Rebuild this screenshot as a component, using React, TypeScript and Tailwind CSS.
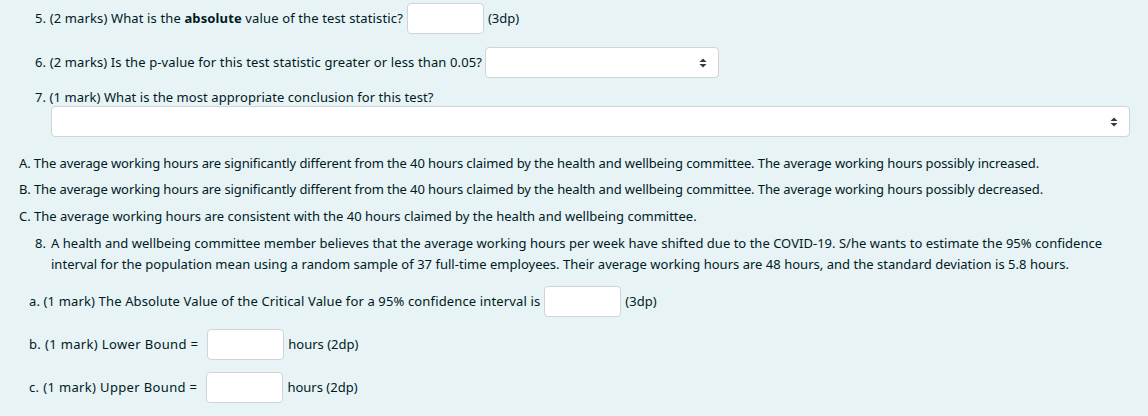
const font = { fontFamily: '"Noto Sans", "Open Sans", sans-serif' };

const TextBox = ({ w }: { w: string }) => (
  <div className={`${w} h-[31px] rounded-[4px] border border-[#ced4da] bg-white`} />
);

const SelectBox = ({ className }: { className: string }) => (
  <div
    className={`${className} flex items-center justify-end rounded-[4px] border border-[#ced4da] bg-white pr-[11px]`}
  >
    <svg width="8" height="10" viewBox="0 0 8 10">
      <path d="M4 0.5 L7.5 4 L0.5 4 Z" fill="#343a40" />
      <path d="M4 9.5 L7.5 6 L0.5 6 Z" fill="#343a40" />
    </svg>
  </div>
);

export default function App() {
  return (
    <div
      className="w-[1148px] h-[416px] overflow-hidden bg-[#e7f3f5] text-[13px] text-[#001a1e]"
      style={font}
    >
      <div className="pt-[3px]">
        {/* Q5 */}
        <div className="flex items-center pl-[35px]">
          <span className="tracking-[0.13px]">
            5. (2 marks) What is the <b>absolute</b> value of the test statistic?
          </span>
          <div className="ml-[4px]">
            <TextBox w="w-[77px]" />
          </div>
          <span className="ml-[4px]">(3dp)</span>
        </div>

        {/* Q6 */}
        <div className="mt-[13px] flex items-center pl-[35px]">
          <span className="tracking-[0.12px]">
            6. (2 marks) Is the p-value for this test statistic greater or less
            than 0.05?
          </span>
          <SelectBox className="ml-[3px] w-[234px] h-[31px]" />
        </div>

        {/* Q7 */}
        <div className="mt-[10px] pl-[35px] leading-[18px] tracking-[0.07px]">
          7. (1 mark) What is the most appropriate conclusion for this test?
        </div>
        <div className="pl-[51px] pr-[18px]">
          <SelectBox className="w-full h-[31px]" />
        </div>

        {/* options */}
        <div className="mt-[16px] pl-[19px] flex flex-col gap-[6px] leading-[20px]">
          <div className="tracking-[-0.1px]">
            A. The average working hours are significantly different from the 40
            hours claimed by the health and wellbeing committee. The average
            working hours possibly increased.
          </div>
          <div className="tracking-[-0.1px]">
            B. The average working hours are significantly different from the 40
            hours claimed by the health and wellbeing committee. The average
            working hours possibly decreased.
          </div>
          <div className="mt-[1px]">
            C. The average working hours are consistent with the 40 hours claimed
            by the health and wellbeing committee.
          </div>
        </div>

        {/* Q8 */}
        <div className="mt-[7px] flex pl-[35px] pr-[18px] leading-[21px]">
          <span className="w-[16px] shrink-0">8.</span>
          <span className="tracking-[0.02px]">
            A health and wellbeing committee member believes that the average
            working hours per week have shifted due to the COVID-19. S/he wants
            to estimate the 95% confidence interval for the population mean
            using a random sample of 37 full-time employees. Their average
            working hours are 48 hours, and the standard deviation is 5.8 hours.
          </span>
        </div>

        <div className="pl-[29px]">
          <div className="mt-[11px] flex items-center">
            <span className="tracking-[0.14px]">
              a. (1 mark) The Absolute Value of the Critical Value for a 95%
              confidence interval is
            </span>
            <div className="ml-[4px]">
              <TextBox w="w-[77px]" />
            </div>
            <span className="ml-[4px]">(3dp)</span>
          </div>
          <div className="mt-[12px] flex items-center">
            <span className="tracking-[0.35px]">b. (1 mark) Lower Bound =</span>
            <div className="ml-[9px]">
              <TextBox w="w-[77px]" />
            </div>
            <span className="ml-[4px]">hours (2dp)</span>
          </div>
          <div className="mt-[12px] flex items-center">
            <span className="tracking-[0.35px]">c. (1 mark) Upper Bound =</span>
            <div className="ml-[9px]">
              <TextBox w="w-[77px]" />
            </div>
            <span className="ml-[4px]">hours (2dp)</span>
          </div>
        </div>
      </div>
    </div>
  );
}
